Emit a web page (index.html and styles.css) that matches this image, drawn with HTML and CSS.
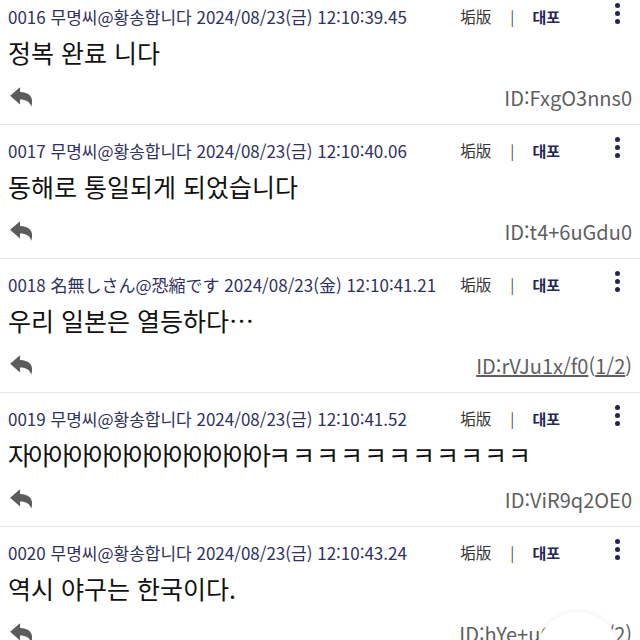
FILE: index.html
```html
<!DOCTYPE html>
<html lang="ko">
<head>
    <meta charset="UTF-8">
    <meta name="viewport" content="width=device-width, initial-scale=1.0">
    <title>스레드</title>
    <link rel="stylesheet" href="styles.css">
</head>
<body>

<div class="thread">
    <div class="post">
        <div class="post-head">
            <span class="info">0016 무명씨@황송합니다 2024/08/23(금) 12:10:39.45</span>
            <span class="ban">垢版</span>
            <span class="bar">|</span>
            <span class="report">대포</span>
            <span class="kebab"><i></i><i></i><i></i></span>
        </div>
        <div class="post-body">정복 완료 니다</div>
        <div class="post-foot">
            <svg class="reply" viewBox="0 0 24 24"><path d="M1 10.8 L10.2 3 V7.4 C18 7.6 23.5 11.3 20.6 21 C18.8 16.2 15.8 14.4 10.2 14.4 V19 Z"/></svg>
            <span class="uid">ID:FxgO3nns0</span>
        </div>
    </div>

    <div class="post">
        <div class="post-head">
            <span class="info">0017 무명씨@황송합니다 2024/08/23(금) 12:10:40.06</span>
            <span class="ban">垢版</span>
            <span class="bar">|</span>
            <span class="report">대포</span>
            <span class="kebab"><i></i><i></i><i></i></span>
        </div>
        <div class="post-body">동해로 통일되게 되었습니다</div>
        <div class="post-foot">
            <svg class="reply" viewBox="0 0 24 24"><path d="M1 10.8 L10.2 3 V7.4 C18 7.6 23.5 11.3 20.6 21 C18.8 16.2 15.8 14.4 10.2 14.4 V19 Z"/></svg>
            <span class="uid">ID:t4+6uGdu0</span>
        </div>
    </div>

    <div class="post">
        <div class="post-head">
            <span class="info">0018 名無しさん@恐縮です 2024/08/23(金) 12:10:41.21</span>
            <span class="ban">垢版</span>
            <span class="bar">|</span>
            <span class="report">대포</span>
            <span class="kebab"><i></i><i></i><i></i></span>
        </div>
        <div class="post-body">우리 일본은 열등하다…</div>
        <div class="post-foot">
            <svg class="reply" viewBox="0 0 24 24"><path d="M1 10.8 L10.2 3 V7.4 C18 7.6 23.5 11.3 20.6 21 C18.8 16.2 15.8 14.4 10.2 14.4 V19 Z"/></svg>
            <span class="uid"><a href="#">ID:rVJu1x/f0</a>(<a href="#">1/2</a>)</span>
        </div>
    </div>

    <div class="post">
        <div class="post-head">
            <span class="info">0019 무명씨@황송합니다 2024/08/23(금) 12:10:41.52</span>
            <span class="ban">垢版</span>
            <span class="bar">|</span>
            <span class="report">대포</span>
            <span class="kebab"><i></i><i></i><i></i></span>
        </div>
        <div class="post-body"><span class="narrow">자아아아아아아아아아아아아</span><span class="jamo">ㅋㅋㅋㅋㅋㅋㅋㅋㅋㅋㅋ</span></div>
        <div class="post-foot">
            <svg class="reply" viewBox="0 0 24 24"><path d="M1 10.8 L10.2 3 V7.4 C18 7.6 23.5 11.3 20.6 21 C18.8 16.2 15.8 14.4 10.2 14.4 V19 Z"/></svg>
            <span class="uid">ID:ViR9q2OE0</span>
        </div>
    </div>

    <div class="post">
        <div class="post-head">
            <span class="info">0020 무명씨@황송합니다 2024/08/23(금) 12:10:43.24</span>
            <span class="ban">垢版</span>
            <span class="bar">|</span>
            <span class="report">대포</span>
            <span class="kebab"><i></i><i></i><i></i></span>
        </div>
        <div class="post-body">역시 야구는 한국이다.</div>
        <div class="post-foot">
            <svg class="reply" viewBox="0 0 24 24"><path d="M1 10.8 L10.2 3 V7.4 C18 7.6 23.5 11.3 20.6 21 C18.8 16.2 15.8 14.4 10.2 14.4 V19 Z"/></svg>
            <span class="uid"><a href="#">ID:hYe+uQk20</a>(<a href="#">1/2</a>)</span>
        </div>
    </div>
</div>

<button class="fab" type="button"></button>

</body>
</html>
```

FILE: styles.css
```css
body {
    font-family: "Noto Sans CJK KR", "Noto Sans", sans-serif;
    background-color: #fff;
    margin: 0;
    overflow: hidden;
}

.thread {
    margin-top: -9px;
}

.post {
    padding: 12px 8px 7px 8px;
    border-bottom: 1px solid #e6e6e6;
}

.post-head {
    display: flex;
    align-items: center;
    height: 26px;
}

.info {
    font-size: 17px;
    color: #2f3160;
    white-space: nowrap;
    flex: 1;
}

.ban {
    font-size: 15.5px;
    color: #333;
}

.bar {
    font-size: 15px;
    color: #555;
    margin: 0 18px 0 19px;
}

.report {
    font-size: 15px;
    color: #1f2756;
    font-weight: bold;
}

.kebab {
    display: flex;
    flex-direction: column;
    gap: 3px;
    margin: -5px 12px 0 55px;
}

.kebab i {
    display: block;
    width: 5px;
    height: 5px;
    border-radius: 50%;
    background-color: #1f2350;
}

.post-body {
    margin-top: 5px;
    font-size: 25px;
    line-height: 36px;
    color: #111;
    white-space: nowrap;
}

.narrow {
    letter-spacing: -3px;
}

.jamo {
    letter-spacing: 1px;
}

.post-foot {
    display: flex;
    align-items: center;
    justify-content: space-between;
    margin-top: 7px;
    height: 40px;
}

.reply {
    width: 26px;
    height: 26px;
    fill: #5c5c5c;
    margin-left: 1px;
}

.uid {
    font-size: 20px;
    color: #5f5f5f;
}

.uid a {
    color: #5f5f5f;
    text-decoration: underline;
}

.fab {
    position: absolute;
    left: 536px;
    top: 612px;
    width: 84px;
    height: 84px;
    border: none;
    border-radius: 50%;
    background-color: #fff;
    box-shadow: 0 0 6px rgba(0, 0, 0, 0.08);
}
```
